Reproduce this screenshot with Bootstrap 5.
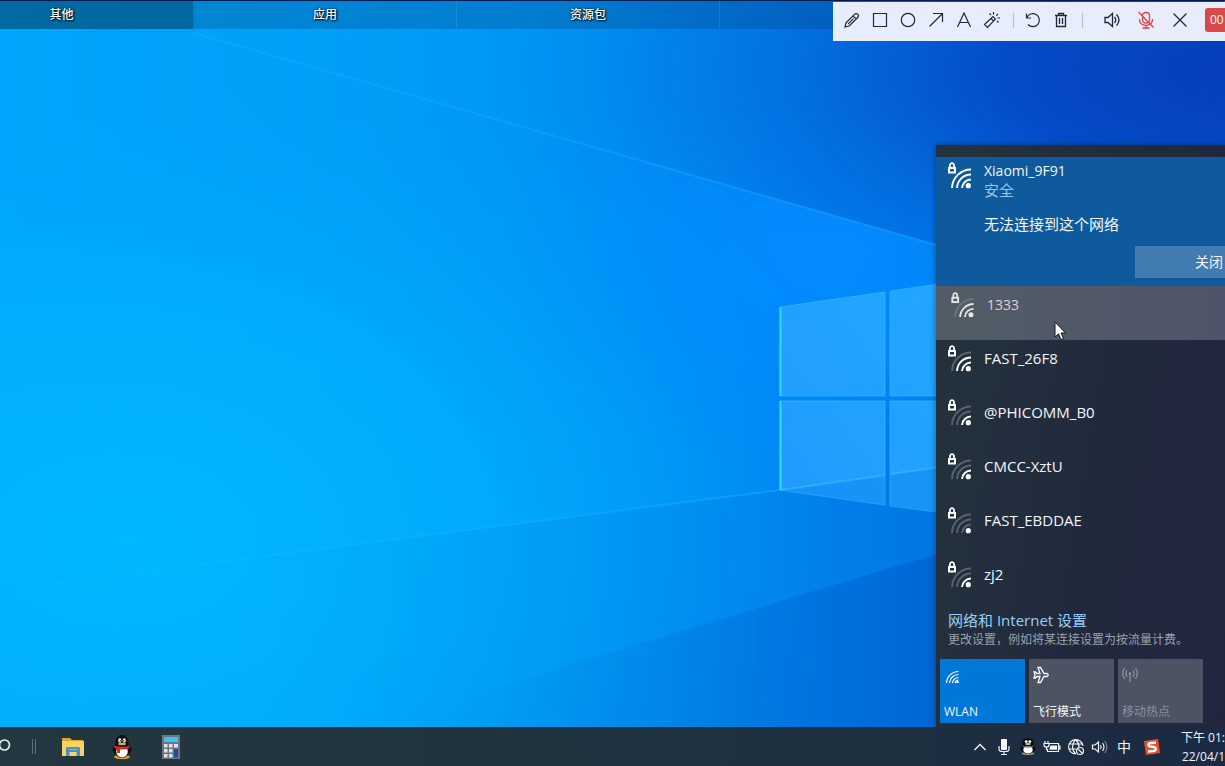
<!DOCTYPE html>
<html lang="zh-CN">
<head>
<meta charset="utf-8">
<meta name="viewport" content="width=device-width, initial-scale=1">
<title>Desktop</title>
<link href="https://cdn.jsdelivr.net/npm/bootstrap@5.3.0/dist/css/bootstrap.min.css" rel="stylesheet">
<style>
  body { font-family: "Open Sans", "Noto Sans CJK SC", sans-serif; font-size: 14px; line-height: 20px; }
  button { font: inherit; border: 0; padding: 0; background: none; color: inherit; }
  svg { display: block; flex: none; }
  .desktop { height: 100vh; background: #0092fb; }
  .wallpaper { inset: 0; width: 100%; height: 100%; }

  .fence-bar { border-top: 1px solid #041c52; height: 29px; }
  .fence-tab { flex: 0 0 263px; background: rgba(0, 62, 110, .28); border-right: 1px solid rgba(90, 180, 240, .22); color: #fff; font-size: 12px; font-weight: 500; text-shadow: 1px 1px 2px #000, 0 0 2px #000; }
  .fence-tab.first { flex-basis: 194px; padding-right: 70px; background: rgba(0, 45, 70, .5); }

  .capture-bar { top: 2px; right: 0; height: 39px; padding: 0 0 3px 5px; background: #e8edfb; color: #23263a; }
  .tool-btn { width: 28px; height: 28px; }
  .tool-sep { width: 1px; height: 15px; margin: 0 5px 0 7px; background: #b3b8c6; }
  .tool-sep.wide { margin-right: 15px; }
  .tool-gap { margin-left: 6px; }
  .rec-time { width: 20px; height: 24px; margin-left: 11px; padding-left: 5px; background: #d8494a; color: #fff; border-radius: 3px 0 0 3px; font-size: 12px; line-height: 24px; }

  .flyout { width: 289px; padding-top: 12px; background: linear-gradient(100deg, #24343e 0%, #212a3d 55%, #21263f 100%); color: #f4f6f8; box-shadow: 0 0 6px rgba(0, 20, 60, .5); }
  .net-row { height: 54px; padding: 4px 0 0 11px; gap: 13px; text-align: left; }
  .net-row .ssid { padding-top: 4px; font-size: 15px; }
  .net-row.pressed { background: linear-gradient(90deg, #525d66, #50546a); padding: 5px 0 0 14px; color: #d3d6dc; }
  .net-row.pressed .ssid { font-size: 14px; }
  .net-current { height: 129px; background: #0f5a9c; padding: 4px 0 8px 11px; }
  .net-head { gap: 13px; }
  .net-current .state { color: #9fc1e2; line-height: 18px; }
  .net-current .message { margin-top: 15px; }
  .font-15 { font-size: 15px; }
  .btn-close-net { width: 90px; height: 32px; padding-right: 2px; background: #427bb1; font-size: 14px; text-align: right; }
  .net-links { padding: 0 0 9px 12px; }
  .net-links a { color: #9ccdf5; text-decoration: none; }
  .net-links p { color: #9aa2ab; font-size: 12px; }
  .tiles { gap: 4px; padding: 0 4px 4px; }
  .tile { width: 85px; height: 64px; padding: 6px 4px 2px; background: #4d5363; font-size: 12px; line-height: 18px; text-align: left; }
  .tile.on { background: #0078d9; }
  .tile.off { color: #8b909c; }
  .pointer { left: 118px; top: 35px; }

  .taskbar { height: 39px; background: linear-gradient(90deg, #22373f 0%, #20343f 40%, #1e2f40 75%, #1b2944 100%); color: #f2f5f7; }
  .task-btn { width: 49px; height: 39px; }
  .tray-btn { width: 24px; height: 39px; }
  .clock { width: 48px; margin-left: 13px; font-size: 12px; line-height: 19px; text-align: right; }
</style>
</head>
<body>
<!-- shared glyphs -->
<svg width="0" height="0" class="position-absolute" aria-hidden="true">
  <defs>
    <g id="lock"><path d="M3 6.500V4.200a2 2 0 0 1 4 0V6.500" fill="none" stroke="#fff" stroke-width="1.800"/><rect x="2" y="7" width="6" height="4.500" fill="none" stroke="#fff" stroke-width="2"/></g>
    <path id="arc3" d="M5 27A19 19 0 0 1 24 8.500" fill="none" stroke="#fff" stroke-width="1.900"/>
    <path id="arc2" d="M10 27A14 14 0 0 1 24 13.500" fill="none" stroke="#fff" stroke-width="1.900"/>
    <path id="arc1" d="M15 27A9 9 0 0 1 24 18.500" fill="none" stroke="#fff" stroke-width="1.900"/>
    <circle id="dot" cx="21.300" cy="24.700" r="2.600" fill="#fff"/>
  </defs>
</svg>

<div class="desktop position-relative d-flex flex-column overflow-hidden">
  <svg class="wallpaper position-absolute" viewBox="0 0 1225 766" preserveAspectRatio="none" aria-hidden="true">
    <defs>
      <linearGradient id="sky" x1="0" x2="1" y1="0" y2="0"><stop offset="0" stop-color="#00a6fd"/><stop offset=".3" stop-color="#009ef8"/><stop offset=".5" stop-color="#0092f4"/><stop offset=".64" stop-color="#0084f2"/><stop offset=".8" stop-color="#0074e8"/><stop offset="1" stop-color="#0560d6"/></linearGradient>
      <radialGradient id="cyan" gradientUnits="userSpaceOnUse" cx="0" cy="0" r="1" gradientTransform="translate(130 540) scale(720 470)"><stop offset="0" stop-color="#00b8ff"/><stop offset=".5" stop-color="#00b0ff" stop-opacity=".75"/><stop offset="1" stop-color="#00a4ff" stop-opacity="0"/></radialGradient>
      <radialGradient id="night" gradientUnits="userSpaceOnUse" cx="0" cy="0" r="1" gradientTransform="translate(1270 70) scale(760 290)"><stop offset="0" stop-color="#063cb8"/><stop offset=".35" stop-color="#0549c6" stop-opacity=".95"/><stop offset=".65" stop-color="#0560d4" stop-opacity=".5"/><stop offset="1" stop-color="#0072e0" stop-opacity="0"/></radialGradient>
      <radialGradient id="glow" gradientUnits="userSpaceOnUse" cx="0" cy="0" r="1" gradientTransform="translate(840 250) scale(340 230)"><stop offset="0" stop-color="#058cff" stop-opacity=".95"/><stop offset=".5" stop-color="#028eff" stop-opacity=".6"/><stop offset="1" stop-color="#0090fb" stop-opacity="0"/></radialGradient>
      <linearGradient id="floor" x1="0" x2="1" y1="0" y2="0"><stop offset=".2" stop-color="#0090e8" stop-opacity="0"/><stop offset=".5" stop-color="#0088e8" stop-opacity=".3"/><stop offset=".78" stop-color="#0076e0" stop-opacity=".5"/></linearGradient>
      <linearGradient id="deep" gradientUnits="userSpaceOnUse" x1="440" x2="940" y1="0" y2="0"><stop offset="0" stop-color="#0080e4" stop-opacity="0"/><stop offset="1" stop-color="#005ccc" stop-opacity=".65"/></linearGradient>
      <linearGradient id="ray" gradientUnits="userSpaceOnUse" x1="190" x2="940" y1="0" y2="0"><stop offset="0" stop-color="#20b0ff" stop-opacity=".35"/><stop offset="1" stop-color="#1a9cff" stop-opacity=".55"/></linearGradient>
      <linearGradient id="ray2" gradientUnits="userSpaceOnUse" x1="0" x2="780" y1="0" y2="0"><stop offset="0" stop-color="#20c0ff" stop-opacity=".15"/><stop offset="1" stop-color="#14b0ff" stop-opacity=".5"/></linearGradient>
      <linearGradient id="pane" x1="0" x2="1" y1="1" y2="0"><stop offset="0" stop-color="#209aff"/><stop offset="1" stop-color="#22a8ff"/></linearGradient>
      <clipPath id="beam"><path d="M0 0H78L1225 327V766H0Z"/></clipPath>
    </defs>
    <rect width="1225" height="766" fill="url(#sky)"/>
    <rect width="1225" height="766" fill="url(#cyan)"/>
    <rect width="1225" height="766" fill="url(#night)"/>
    <rect width="1225" height="766" fill="url(#glow)" clip-path="url(#beam)"/>
    <path d="M0 590L780 490L1225 430V766H0Z" fill="url(#floor)"/>
    <path d="M440 704L940 553V766H250Z" fill="url(#deep)"/>
    <path d="M190 32L940 246" stroke="url(#ray)" stroke-width="2"/>
    <path d="M0 590L780 490" stroke="url(#ray2)" stroke-width="2"/>
    <path d="M780 307L885 292V396H780ZM890 291L960 281V396H890ZM780 401H885V505L780 490ZM890 401H960V515L890 506Z" fill="url(#pane)" stroke="#38c0ff" stroke-opacity=".6"/>
    <path d="M780 490L885 474V505ZM890 474L960 463V515L890 506Z" fill="#0a7ee6" fill-opacity=".35"/>
    <path d="M780 490L885 475M890 474L960 464" stroke="#2db8ff" stroke-width="2" stroke-opacity=".8"/>
    <path d="M780.500 307V396M780.500 401V490" fill="none" stroke="#3bdcff" stroke-width="2" stroke-opacity=".9"/>
  </svg>

  <header class="fence-bar position-relative d-flex">
    <button type="button" class="fence-tab first">其他</button>
    <button type="button" class="fence-tab">应用</button>
    <button type="button" class="fence-tab">资源包</button>
    <div class="fence-tab flex-grow-1"></div>
  </header>

  <div class="capture-bar position-absolute d-flex align-items-center" role="toolbar" aria-label="录屏工具">
    <button type="button" class="tool-btn d-flex align-items-center justify-content-center" aria-label="画笔"><svg width="18" height="18" fill="none" stroke="currentColor" stroke-width="1.200"><path d="M2 16L3 11.800L11.500 3.300Q13 1.800 14.700 3.300T14.700 6.500L6.200 15ZM10 4.800L13.200 8M5 13.200L10.500 7.700"/></svg></button>
    <button type="button" class="tool-btn d-flex align-items-center justify-content-center" aria-label="矩形"><svg width="16" height="16" fill="none" stroke="currentColor" stroke-width="1.200"><path d="M1.500 1.500H14.500V14.500H1.500Z"/></svg></button>
    <button type="button" class="tool-btn d-flex align-items-center justify-content-center" aria-label="圆形"><svg width="16" height="16" fill="none" stroke="currentColor" stroke-width="1.200"><circle cx="8" cy="8" r="6.700"/></svg></button>
    <button type="button" class="tool-btn d-flex align-items-center justify-content-center" aria-label="箭头"><svg width="16" height="16" fill="none" stroke="currentColor" stroke-width="1.200"><path d="M1.500 14.500L14.500 1.500M5 1.500H14.500V10"/></svg></button>
    <button type="button" class="tool-btn d-flex align-items-center justify-content-center" aria-label="文字"><svg width="16" height="16" fill="none" stroke="currentColor" stroke-width="1.200"><path d="M1.500 15L8 1L14.500 15M4 10.500H12"/></svg></button>
    <button type="button" class="tool-btn d-flex align-items-center justify-content-center" aria-label="魔棒"><svg width="18" height="18" fill="none" stroke="currentColor" stroke-width="1.200"><path d="M1.500 13.500L10 5.500L12.500 8L4.500 16.500ZM8 7.500L10.500 10M10.500 1V3.500M6.500 2.500L8 4M15 3L13.300 4.700M17 7H14.500M14 10L15.500 11.500"/></svg></button>
    <span class="tool-sep"></span>
    <button type="button" class="tool-btn d-flex align-items-center justify-content-center" aria-label="撤销"><svg width="18" height="18" fill="none" stroke="currentColor" stroke-width="1.200"><path d="M2.500 2.500V7H7M2.800 6.800A6.500 6.500 0 1 1 4 13.500"/></svg></button>
    <button type="button" class="tool-btn d-flex align-items-center justify-content-center" aria-label="删除"><svg width="16" height="18" fill="none" stroke="currentColor" stroke-width="1.300"><path d="M2 4.500H14M5.500 4.500V2.500H10.500V4.500M3.500 4.500V15.500H12.500V4.500M6.500 7V13M9.500 7V13"/></svg></button>
    <span class="tool-sep wide"></span>
    <button type="button" class="tool-btn d-flex align-items-center justify-content-center" aria-label="声音"><svg width="18" height="18" fill="none" stroke="currentColor" stroke-width="1.300"><path d="M2 6.500H5L9.500 2.500V15.500L5 11.500H2ZM11.500 6Q14 9 11.500 12M13.500 3.500Q18.500 9 13.500 14.500"/></svg></button>
    <button type="button" class="tool-btn tool-gap d-flex align-items-center justify-content-center" aria-label="麦克风"><svg width="18" height="18" fill="none" stroke="#dc4048" stroke-width="1.300"><path d="M5.500 4.500Q5.500 1.500 9 1.500T12.500 4.500V8.500Q12.500 12 9 12T5.500 8.500ZM2.500 8Q2.500 14.300 9 14.300T15.500 8M9 14.300V17M5.500 17H12.500M1.500 1L16.500 16.500"/></svg></button>
    <button type="button" class="tool-btn tool-gap d-flex align-items-center justify-content-center" aria-label="关闭"><svg width="16" height="16" fill="none" stroke="currentColor" stroke-width="1.300"><path d="M1.500 1.500L14.500 14.500M14.500 1.500L1.500 14.500"/></svg></button>
    <span class="rec-time text-nowrap">00</span>
  </div>

  <main class="position-relative flex-grow-1 d-flex justify-content-end align-items-end">
    <aside class="flyout" aria-label="网络">
      <section class="net-current d-flex flex-column">
        <div class="net-head d-flex">
          <svg width="24" height="28"><use href="#lock"/><use href="#arc3"/><use href="#arc2"/><use href="#arc1"/><use href="#dot"/></svg>
          <div>
            <div>Xiaomi_9F91</div>
            <div class="state font-15">安全</div>
            <div class="message font-15">无法连接到这个网络</div>
          </div>
        </div>
        <button type="button" class="btn-close-net mt-auto ms-auto">关闭</button>
      </section>
      <div class="position-relative">
        <button type="button" class="net-row pressed d-flex w-100"><svg width="24" height="27" viewBox="0 0 24 28" opacity=".85"><use href="#lock"/><use href="#arc3" opacity=".2"/><use href="#arc2"/><use href="#arc1"/><use href="#dot"/></svg><span class="ssid">1333</span></button>
        <svg class="pointer position-absolute" width="14" height="20" aria-hidden="true"><path d="M1 1V16L4.500 12.800L7 18.500L9.500 17.400L7 12H11.500Z" fill="#fff" stroke="#15181f"/></svg>
      </div>
      <button type="button" class="net-row d-flex w-100"><svg width="24" height="28"><use href="#lock"/><use href="#arc3" opacity=".25"/><use href="#arc2"/><use href="#arc1"/><use href="#dot"/></svg><span class="ssid">FAST_26F8</span></button>
      <button type="button" class="net-row d-flex w-100"><svg width="24" height="28"><use href="#lock"/><use href="#arc3" opacity=".25"/><use href="#arc2" opacity=".25"/><use href="#arc1"/><use href="#dot"/></svg><span class="ssid">@PHICOMM_B0</span></button>
      <button type="button" class="net-row d-flex w-100"><svg width="24" height="28"><use href="#lock"/><use href="#arc3" opacity=".25"/><use href="#arc2" opacity=".25"/><use href="#arc1"/><use href="#dot"/></svg><span class="ssid">CMCC-XztU</span></button>
      <button type="button" class="net-row d-flex w-100"><svg width="24" height="28"><use href="#lock"/><use href="#arc3" opacity=".25"/><use href="#arc2" opacity=".25"/><use href="#arc1" opacity=".25"/><use href="#dot"/></svg><span class="ssid">FAST_EBDDAE</span></button>
      <button type="button" class="net-row d-flex w-100"><svg width="24" height="28"><use href="#lock"/><use href="#arc3" opacity=".25"/><use href="#arc2" opacity=".25"/><use href="#arc1"/><use href="#dot"/></svg><span class="ssid">zj2</span></button>
      <div class="net-links">
        <a href="#" class="d-block font-15">网络和 Internet 设置</a>
        <p class="mb-0 text-nowrap">更改设置，例如将某连接设置为按流量计费。</p>
      </div>
      <div class="tiles d-flex">
        <button type="button" class="tile on d-flex flex-column justify-content-between"><svg width="20" height="20" fill="none" stroke="#fff" stroke-width="1.200"><path d="M2.500 18A12 12 0 0 1 14.500 6.500M5.500 18A9 9 0 0 1 14.500 9.500M8.500 18A6 6 0 0 1 14.500 12.500M11 18A4 4 0 0 1 14.500 15"/><circle cx="13.500" cy="17" r="1.300" fill="#fff" stroke="none"/></svg>WLAN</button>
        <button type="button" class="tile d-flex flex-column justify-content-between"><svg width="18" height="20" fill="none" stroke="#fff" stroke-width="1.300"><path d="M5 2.500H7.500L11 8.500H14Q16.500 10 14 11.500H11L7.500 17.500H5L7 11.500H4L2.500 13H1L2 10L1 7H2.500L4 8.500H7Z"/></svg>飞行模式</button>
        <button type="button" class="tile off d-flex flex-column justify-content-between"><svg width="18" height="20" fill="none" stroke="currentColor" stroke-width="1.300"><path d="M8 9V17M5 5Q3 8.500 5 12M11 5Q13 8.500 11 12M2.500 3Q-1 8.500 2.500 14M13.500 3Q17 8.500 13.500 14"/><circle cx="8" cy="8.500" r="1.200" fill="currentColor" stroke="none"/></svg>移动热点</button>
      </div>
    </aside>
  </main>

  <footer class="taskbar position-relative d-flex align-items-center">
    <svg width="48" height="39" fill="none" stroke="#e8eef0" role="img" aria-label="搜索"><circle cx="4.500" cy="18" r="5" stroke-width="1.700"/><path d="M32.500 12V27M35.500 12V27" stroke="#5f7077"/></svg>
    <button type="button" class="task-btn d-flex align-items-center justify-content-center" aria-label="文件资源管理器"><svg width="22" height="20"><path d="M0 1H8L10 3H21V18H0Z" fill="#e0a02a"/><path d="M0 4H22V19H0Z" fill="#f6d268"/><path d="M4 11.500Q4 10 5.500 10H16.500Q18 10 18 11.500V19H14.500V15H7.500V19H4Z" fill="#4a93b8"/><path d="M7 12H15V13H7Z" fill="#7fc0d8"/></svg></button>
    <button type="button" class="task-btn d-flex align-items-center justify-content-center" aria-label="QQ"><svg width="22" height="24"><ellipse cx="11" cy="14.500" rx="9.500" ry="6" fill="#0c0d10"/><ellipse cx="11" cy="22" rx="8" ry="2" fill="#f2a51c"/><ellipse cx="11" cy="15" rx="7.500" ry="8" fill="#0c0d10"/><ellipse cx="11" cy="16.500" rx="5.800" ry="6" fill="#fff"/><path d="M4.500 9Q4 0 11 0T17.500 9Q17 12 11 12T4.500 9Z" fill="#0c0d10"/><ellipse cx="8.800" cy="5.500" rx="1.600" ry="2.200" fill="#fff"/><ellipse cx="13.200" cy="5.500" rx="1.600" ry="2.200" fill="#fff"/><circle cx="9.200" cy="5.800" r=".7"/><circle cx="12.800" cy="5.800" r=".7"/><ellipse cx="11" cy="9" rx="4" ry="1.200" fill="#f2a51c"/><path d="M3.500 10.500Q11 14 18.500 10.500V13Q14 15 9 14.500V18H6V14L3 12.500Z" fill="#e0232c"/></svg></button>
    <button type="button" class="task-btn d-flex align-items-center justify-content-center" aria-label="计算器"><svg width="18" height="24"><rect width="18" height="24" fill="#6b7680"/><rect x="2" y="2" width="14" height="5" fill="#3fc0ee"/><path d="M2 9H5.500V12.500H2ZM7 9H10.500V12.500H7ZM12 9H16V12.500H12ZM2 14H5.500V17.500H2ZM7 14H10.500V17.500H7ZM2 19H5.500V22.500H2ZM7 19H10.500V22.500H7Z" fill="#dce4ea"/><path d="M12 14H16V22.500H12Z" fill="#18529c"/></svg></button>
    <div class="d-flex align-items-center ms-auto">
      <button type="button" class="tray-btn d-flex align-items-center justify-content-center" aria-label="显示隐藏的图标"><svg width="14" height="14" fill="none" stroke="currentColor" stroke-width="1.300"><path d="M1.500 10L7 4.500L12.500 10"/></svg></button>
      <button type="button" class="tray-btn d-flex align-items-center justify-content-center" aria-label="麦克风"><svg width="14" height="18" fill="none" stroke="currentColor" stroke-width="1.200"><rect x="4" y="1" width="6" height="11" rx="1" fill="currentColor" stroke="none"/><path d="M2 8V11Q2 13.500 5 13.500H9Q12 13.500 12 11V8M7 13.500V16.500M4 16.500H10"/></svg></button>
      <button type="button" class="tray-btn d-flex align-items-center justify-content-center" aria-label="QQ"><svg width="16" height="17" viewBox="0 0 22 24" preserveAspectRatio="none"><ellipse cx="11" cy="14.500" rx="10.500" ry="6" fill="#0a0b0e"/><ellipse cx="11" cy="22" rx="8.500" ry="2" fill="#b5a888"/><ellipse cx="11" cy="15" rx="8" ry="7.500" fill="#0a0b0e"/><ellipse cx="11" cy="16.500" rx="6.500" ry="5.500" fill="#fff"/><path d="M3.500 9Q3 0 11 0T18.500 9Q17 12 11 12T3.500 9Z" fill="#0a0b0e"/><ellipse cx="8.500" cy="5" rx="2" ry="2" fill="#fff"/><ellipse cx="13.500" cy="5" rx="2" ry="2" fill="#fff"/><ellipse cx="11" cy="8.500" rx="4" ry="1.300" fill="#d8ceb4"/><path d="M3.500 11Q11 14 18.500 11V12.500Q11 15 3.500 12.500Z" fill="#7a8894"/></svg></button>
      <button type="button" class="tray-btn d-flex align-items-center justify-content-center" aria-label="电池"><svg width="18" height="14" fill="none" stroke="currentColor" stroke-width="1.200"><path d="M5.500 3.500H15.500V11.500H4.500V9M15.500 6H17V9H15.500M2 1V3.500M5 1V3.500M1 3.500H6V5Q6 7 3.500 7T1 5ZM3.500 7V9.500H5"/><path d="M7.500 5.500H14V9.800H6.500V8.500Z" fill="currentColor" stroke="none"/></svg></button>
      <button type="button" class="tray-btn d-flex align-items-center justify-content-center" aria-label="网络"><svg width="18" height="18" fill="none" stroke="currentColor" stroke-width="1.200"><path d="M16 8A7.200 7.200 0 1 0 9 16M1.500 6H15.500M1.500 11H9M8.500 1.500Q2.500 9 8.500 16M8.500 1.500Q12 5 12 9"/><circle cx="13" cy="13" r="3.500"/><path d="M10.500 10.500L15.500 15.500"/></svg></button>
      <button type="button" class="tray-btn d-flex align-items-center justify-content-center" aria-label="音量"><svg width="18" height="16" fill="none" stroke="currentColor" stroke-width="1.200"><path d="M1.500 6H4L7.500 3V13L4 10H1.500ZM9.500 6Q11 8 9.500 10M11.500 4Q14.500 8 11.500 12"/><path d="M13.800 2Q18 8 13.800 14" stroke-opacity=".45"/></svg></button>
      <button type="button" class="tray-btn" aria-label="输入法">中</button>
      <button type="button" class="tray-btn ms-1 d-flex align-items-center justify-content-center" aria-label="搜狗输入法"><svg width="18" height="18"><path d="M1 3L15 1L17 15L3 17Z" fill="#e8502a"/><path d="M13 4.700L8 5Q5.200 5.300 5.500 7T8.500 8.700Q12.800 9 12.800 11T10 13.200L5 13.500" fill="none" stroke="#fff" stroke-width="2.300"/></svg></button>
      <div class="clock text-nowrap"><div>下午 01:</div><div>22/04/1</div></div>
    </div>
  </footer>
</div>
<script src="https://cdn.jsdelivr.net/npm/bootstrap@5.3.0/dist/js/bootstrap.bundle.min.js"></script>
</body>
</html>
